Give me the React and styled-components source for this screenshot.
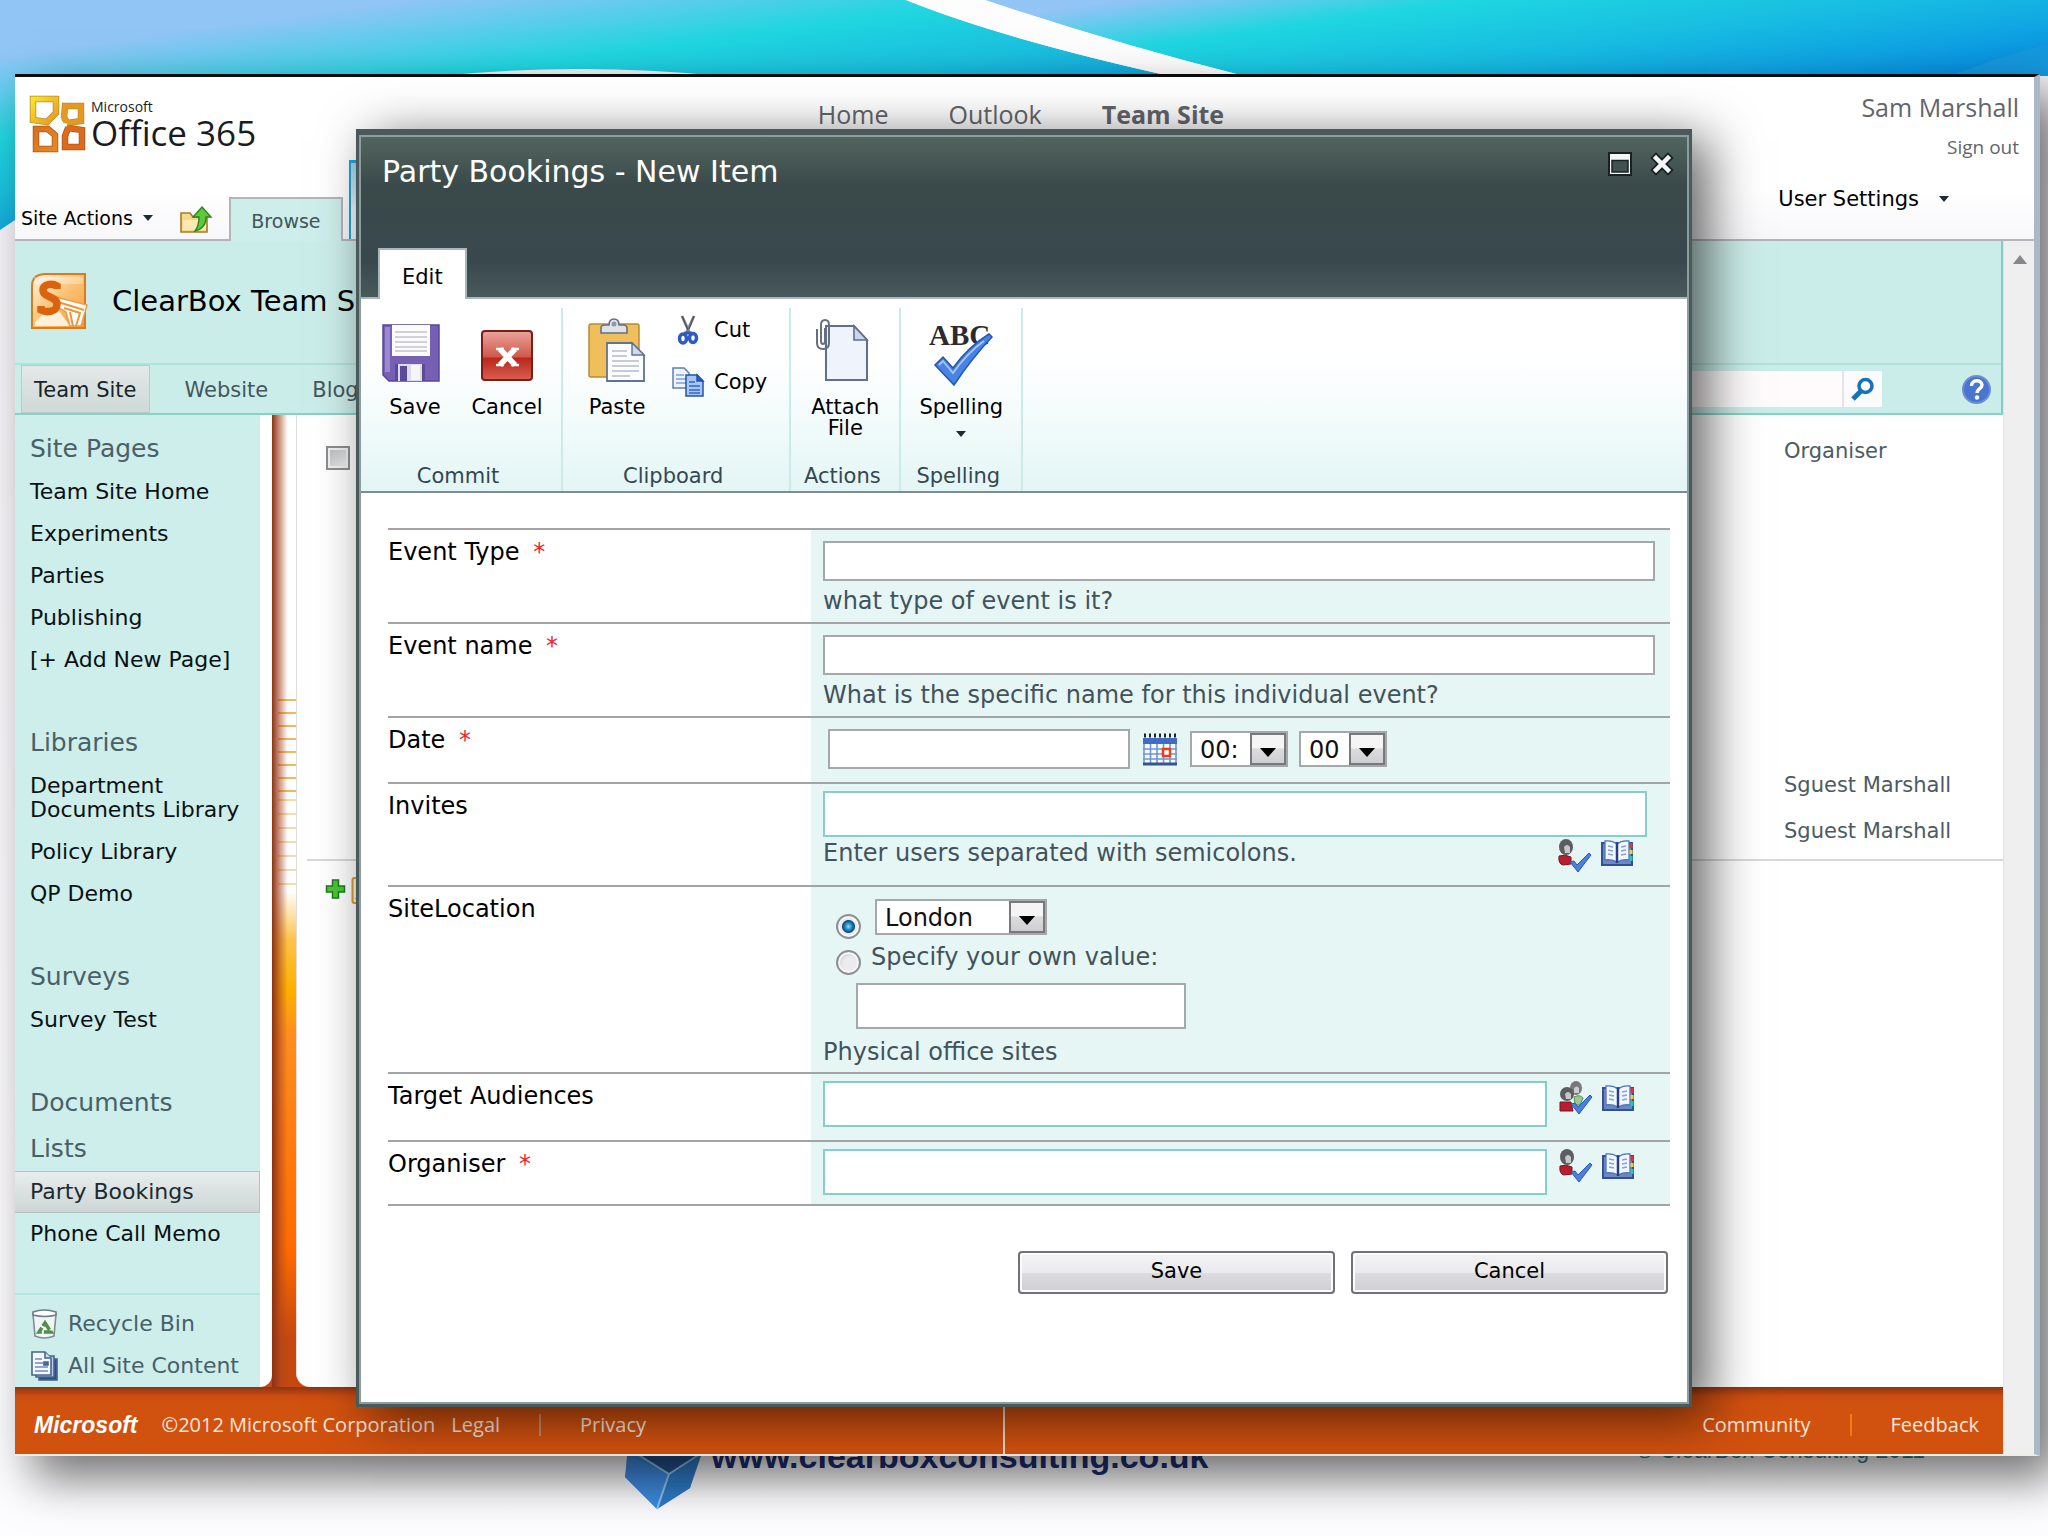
import React from "react";
import styled, { createGlobalStyle, css } from "styled-components";

const verdana = `"DejaVu Sans", "Noto Sans", sans-serif`;
const segoe = `"Open Sans", "Noto Sans", sans-serif`;

const GlobalStyle = createGlobalStyle`
  *, *::before, *::after { box-sizing: border-box; }
  body { margin: 0; background: #fbf9fc; font-family: ${verdana}; color: #000; }
  a { color: inherit; text-decoration: none; }
  button { font: inherit; color: inherit; background: none; border: 0; padding: 0; cursor: pointer; }
  input, select { font: inherit; margin: 0; border-radius: 0; }
  ul { list-style: none; margin: 0; padding: 0; }
  h1, h2, h3, p { margin: 0; font-weight: 400; }
  svg { display: block; flex: none; overflow: visible; }
`;

/* ---------- slide ---------- */

const Slide = styled.div`
  position: relative;
  min-height: 100vh;
  padding: 74px 8px 0 15px;
  overflow: hidden;
  background: linear-gradient(#f4f2f6, #faf8fb 60%, #fdfcfe);
`;

const Backdrop = styled.svg`
  position: absolute;
  top: 0;
  left: 0;
  width: 100%;
  height: 240px;
`;

const SlideFooter = styled.footer`
  display: flex;
  align-items: flex-start;
  gap: 8px;
  margin-top: -20px;
  padding: 0 115px 0 610px;
  min-height: 100px;
`;

const SlideUrl = styled.strong`
  position: relative;
  font: 700 34px/40px "Liberation Sans", sans-serif;
  color: #1f2f74;
`;

const SlideCopyright = styled.span`
  position: relative;
  margin-left: auto;
  font: 400 23px/28px "Liberation Sans", sans-serif;
  color: #2c7f88;
`;

const Gem = styled.svg`
  position: relative;
`;

/* ---------- browser window ---------- */

const Window = styled.div`
  position: relative;
  z-index: 1;
  background: #fff;
  border-top: 3px solid #0c0c0e;
  border-right: 6px solid #a9b9c8;
  border-bottom: 2px solid #f0ece8;
  box-shadow: 18px 22px 44px rgba(0, 0, 0, 0.55);
`;

const Header = styled.header`
  background: linear-gradient(#fff, #fff 70%, #f7f6f9);
`;

const TopRow = styled.div`
  display: grid;
  grid-template-columns: 1fr auto 1fr;
  height: 83px;
  padding: 14px 15px 0 8px;
  font-family: ${segoe};
  color: #63656b;
`;

const Brand = styled.a`
  display: flex;
  gap: 6px;
  padding: 5px 0 0 7px;
  color: #1b1b1d;
`;

const BrandText = styled.span`
  display: flex;
  flex-direction: column;
  font-size: 35px;
  line-height: 36px;
`;

const BrandSmall = styled.span`
  font-size: 14px;
  line-height: 16px;
  padding-top: 3px;
`;

const TopNav = styled.nav`
  display: flex;
  gap: 60px;
  padding-top: 6px;
  font-size: 25px;
  line-height: 34px;
`;

const TopLink = styled.a`
  font-weight: ${(p) => (p.$current ? 700 : 400)};
`;

const Account = styled.div`
  display: flex;
  flex-direction: column;
  align-items: flex-end;
  gap: 11px;
  font-size: 25px;
  line-height: 32px;
`;

const SignOut = styled.a`
  font-size: 19px;
  line-height: 26px;
`;

const RibbonBar = styled.div`
  display: flex;
  align-items: flex-end;
  height: 81px;
  padding-left: 6px;
  border-bottom: 2px solid #b4b5ba;
`;

const MenuButton = styled.button`
  display: flex;
  align-items: center;
  gap: 10px;
  font-size: 19px;
  line-height: 24px;
  margin-bottom: 9px;
`;

const UserMenu = styled(MenuButton)`
  gap: 20px;
  font-size: 21px;
  margin: 0 85px 28px auto;
`;

const Arrow = styled.span`
  border: 5px solid transparent;
  border-top: 6px solid #1d2c33;
  border-bottom: 0;
`;

const UpButton = styled.button`
  margin: 0 17px 5px 27px;
`;

const BrowseTab = styled.button`
  width: 114px;
  height: 44px;
  margin-bottom: -2px;
  padding-top: 2px;
  border: 2px solid #b4b5ba;
  border-bottom: 0;
  background: #cdeeea;
  color: #44545b;
  font-size: 19px;
  line-height: 24px;
`;

const ContextTab = styled.div`
  width: 60px;
  height: 79px;
  margin-left: 6px;
  border-top: 3px solid #19a7df;
  border-left: 2px solid #19a7df;
  background: linear-gradient(#9fd5ea, #f3f6fb 60%);
`;

const Viewport = styled.div`
  display: flex;
`;

const Main = styled.div`
  flex: 1;
  min-width: 0;
`;

const ScrollTrack = styled.div`
  width: 31px;
  padding: 14px 0 0 9px;
  border-left: 1px solid #e3e3e5;
  background: #efeff0;
`;

const SiteBand = styled.div`
  border-right: 2px solid #83d0c3;
  border-bottom: 2px solid #86d3c5;
  background: #cbede9;
`;

const SiteTitle = styled.div`
  display: flex;
  align-items: center;
  gap: 25px;
  height: 124px;
  padding: 0 0 2px 15px;
  border-bottom: 2px solid #ace5da;
`;

const SiteName = styled.h1`
  font-size: 29px;
  line-height: 36px;
`;

const TabBar = styled.nav`
  display: flex;
  height: 48px;
  padding-left: 6px;
  font-size: 21px;
  line-height: 24px;
  color: #44575d;
`;

const SiteTab = styled.a`
  padding: 13px 22px 11px;
  ${(p) =>
    p.$current &&
    css`
      padding: 12px 12px 10px;
      margin-right: 13px;
      border: 1px solid #bccac8;
      color: #17242a;
      background: linear-gradient(#e3e9e8, #cfd9d8);
    `}
`;

const SearchForm = styled.form`
  display: flex;
  align-items: center;
  margin-left: auto;
  padding-right: 10px;
`;

const SearchInput = styled.input`
  width: 300px;
  height: 36px;
  border: 0;
  border-right: 2px solid #e4e4e8;
  background: #fdfbfc;
`;

const SearchButton = styled.button`
  display: grid;
  place-items: center;
  width: 38px;
  height: 36px;
  margin-right: 80px;
  background: #fcfbfc;
`;

/* ---------- page body ---------- */

const Body = styled.div`
  display: flex;
  background: #c4480f;
`;

const SideWrap = styled.div`
  display: flex;
  flex: none;
  padding-right: 12px;
  overflow: hidden;
  background: #fff;
  border-bottom-right-radius: 12px;
`;

const Sidebar = styled.aside`
  width: 245px;
  background: #cdeeea;
`;

const SideHeading = styled.h2`
  margin-top: ${(p) => (p.$gap === "first" ? 19 : p.$gap === "tight" ? 9 : 47)}px;
  padding: 0 0 7px 15px;
  font-size: 25px;
  line-height: 30px;
  color: #4a6068;
`;

const SideLink = styled.a`
  display: flex;
  align-items: center;
  min-height: 42px;
  padding: 9px 15px;
  font-size: 22px;
  line-height: 24px;
  color: #0b1114;
  ${(p) =>
    p.$current &&
    css`
      border: 1px solid #b5c1c1;
      border-left: 0;
      padding: 8px 15px;
      color: #1c2a30;
      background: linear-gradient(#e8edec, #cdd6d6);
    `}
`;

const ToolLink = styled(SideLink)`
  gap: 10px;
  height: 42px;
  padding: 0 16px;
  color: #48606a;
`;

const SideTools = styled.div`
  margin-top: 38px;
  padding-top: 8px;
  border-top: 2px solid #b2e6df;
`;

const OrangeRail = styled.div`
  flex: none;
  width: 24px;
  background:
    linear-gradient(to right, #8d3211, #a5452080 35%, transparent 65%),
    repeating-linear-gradient(#f3b75c 0 2px, transparent 2px 13px) right 284px / 18px 96px no-repeat,
    repeating-linear-gradient(#f8d9a8 0 2px, transparent 2px 14px) right 384px / 18px 90px no-repeat,
    linear-gradient(#fff, #fff 49%, #ffc24a 54%, #ffb000 59%, #ff8d1f 64%, #ff6a00 86%, #c4480f 95%);
`;

const Content = styled.section`
  flex: 1;
  min-width: 0;
  padding-left: 10px;
  border-left: 1px solid #dcdce0;
  border-bottom-left-radius: 14px;
  background: #fff;
`;

const ListTable = styled.table`
  width: 100%;
  border-collapse: collapse;
  border-bottom: 2px solid #d7d8dc;
  font-size: 21px;
  line-height: 24px;
  color: #4b5b62;
  td, th {
    padding: 0;
    font-weight: 400;
    text-align: left;
    vertical-align: top;
  }
`;

const ListHeadRow = styled.tr`
  height: 358px;
`;

const ListRow = styled.tr`
  height: ${(p) => (p.$last ? 41 : 46)}px;
`;

const HeadCell = styled.th`
  &&& {
    padding-top: ${(p) => p.$top}px;
    padding-left: ${(p) => p.$left || 0}px;
    width: ${(p) => p.$width || "auto"};
  }
`;

const CheckBox = styled.input`
  appearance: none;
  display: block;
  width: 24px;
  height: 24px;
  border: 2px solid #8b8d90;
  background: linear-gradient(135deg, #b4b6b9, #f4f4f5);
  box-shadow: inset 0 0 0 2px #f0f0f1;
`;

const AddRow = styled.div`
  display: flex;
  gap: 6px;
  padding: 18px 0 0 19px;
`;

const SiteFooter = styled.footer`
  display: flex;
  align-items: center;
  height: 67px;
  padding: 8px 24px 0 19px;
  background: linear-gradient(#8e3512, #c94c0f 9px, #d1510f 16px);
  font: 400 20px/28px ${segoe};
  color: #fbe6da;
`;

const FooterLogo = styled.strong`
  margin-right: 24px;
  font: italic 900 23px/28px "Liberation Sans", sans-serif;
  color: #fff;
`;

const FooterLink = styled.a`
  margin-left: ${(p) => p.$gap || 0}px;
`;

const FooterBar = styled.span`
  width: 2px;
  height: 22px;
  margin: 0 39px;
  background: ${(p) => p.$color};
`;

const FooterRight = styled.div`
  display: flex;
  align-items: center;
  margin-left: auto;
`;

const FooterRule = styled.span`
  width: 2px;
  height: 59px;
  margin-left: 357px;
  background: #f0d9cc;
`;

/* ---------- dialog ---------- */

const Dialog = styled.div`
  position: absolute;
  z-index: 2;
  top: 52px;
  left: 341px;
  right: 342px;
  border: 3px solid #4a5a5a;
  border-top-width: 6px;
  box-shadow: 16px 10px 48px rgba(0, 0, 0, 0.62);
`;

const DialogInner = styled.div`
  border: 2px solid #8b9d9f;
  background: #fff;
`;

const DialogHead = styled.div`
  display: flex;
  flex-direction: column;
  gap: 56px;
  padding: 15px 14px 0 17px;
  border-bottom: 2px solid #a9b7ba;
  background: linear-gradient(#53655f, #3a4a4a 30%, #38484d 78%, #4a5a5b);
`;

const DialogTitleRow = styled.div`
  display: flex;
  justify-content: space-between;
  padding-left: 4px;
`;

const DialogTitle = styled.h2`
  font-size: 30px;
  line-height: 40px;
  color: #fff;
`;

const DialogControls = styled.div`
  display: flex;
  align-items: flex-start;
  gap: 19px;
`;

const EditTab = styled.button`
  align-self: flex-start;
  margin-bottom: -2px;
  padding: 15px 22px 10px;
  border: 2px solid #a9b7ba;
  border-bottom: 0;
  background: #fff;
  font-size: 21px;
  line-height: 24px;
`;

const Ribbon = styled.div`
  display: flex;
  height: 194px;
  padding-top: 9px;
  border-bottom: 2px solid #7d8d92;
  background: linear-gradient(#fff 30%, #f0fafa 70%, #e3f5f6);
`;

const Group = styled.div`
  display: flex;
  flex-direction: column;
  justify-content: space-between;
  padding: 0 8px 3px;
  border-right: 2px solid #c9ece9;
  font-size: 21px;
`;

const GroupTools = styled.div`
  display: flex;
`;

const GroupLabel = styled.div`
  padding-right: 6px;
  line-height: 24px;
  text-align: center;
  white-space: nowrap;
  color: #35474f;
`;

const BigButton = styled.button`
  display: flex;
  flex-direction: column;
  align-items: center;
  width: ${(p) => p.$width || 92}px;
  padding-top: 10px;
  font-size: 21px;
  line-height: 21px;
  svg { margin-bottom: 15px; }
`;

const MenuArrow = styled(Arrow)`
  margin-top: 13px;
`;

const SmallTools = styled.div`
  display: flex;
  flex-direction: column;
  gap: 20px;
  padding: 6px 14px 0 9px;
`;

const SmallButton = styled.button`
  display: flex;
  align-items: center;
  gap: 10px;
  height: 32px;
  font-size: 21px;
  line-height: 24px;
`;

const Form = styled.form`
  padding: 35px 17px 108px 27px;
  font-size: 24px;
  line-height: 28px;
`;

const Fields = styled.div`
  border-bottom: 2px solid #a2a4a7;
`;

const Row = styled.div`
  display: grid;
  grid-template-columns: minmax(0, 423px) minmax(0, 1fr);
  border-top: 2px solid #a2a4a7;
`;

const Label = styled.label`
  padding-top: 8px;
`;

const Star = styled.span`
  margin-left: 6px;
  color: #f0232b;
`;

const Field = styled.div`
  display: flex;
  flex-direction: column;
  gap: ${(p) => p.$gap || 0}px;
  padding: ${(p) => p.$top}px 15px ${(p) => p.$bottom}px 12px;
  background: #e6f6f5;
`;

const TextInput = styled.input`
  width: ${(p) => p.$width || "100%"};
  height: ${(p) => (p.$tall ? 46 : 40)}px;
  padding: 0 8px;
  border: 2px solid ${(p) => (p.$teal ? "#84d0c9" : "#a5a8ab")};
  background: #fff;
`;

const Help = styled.p`
  color: #42535b;
`;

const DateLine = styled.div`
  display: flex;
  align-items: center;
  gap: 11px;
  padding-left: 5px;
`;

const DateButton = styled.button`
  padding: 0 2px;
`;

const SelectBox = styled.span`
  position: relative;
  display: inline-block;
  width: ${(p) => p.$width}px;
  height: 36px;
  border: 2px solid #a5a8ab;
  background: #fff;
  &::before {
    content: "";
    position: absolute;
    top: 0;
    right: 0;
    width: 36px;
    height: 32px;
    border: 2px solid #77797c;
    background: linear-gradient(#f5f5f6 45%, #dcdcde 50%, #cfcfd2);
    pointer-events: none;
  }
  &::after {
    content: "";
    position: absolute;
    right: 10px;
    top: 15px;
    border: 8px solid transparent;
    border-top: 9px solid #000;
    border-bottom: 0;
    pointer-events: none;
  }
`;

const Select = styled.select`
  appearance: none;
  display: block;
  width: 100%;
  height: 32px;
  padding: 2px 0 0 8px;
  border: 0;
  background: transparent;
  color: #111;
  line-height: 30px;
`;

const PickerLine = styled.div`
  display: flex;
  align-items: flex-start;
  gap: 12px;
  padding-right: 21px;
`;

const HelpLine = styled.div`
  display: flex;
  justify-content: space-between;
  padding-right: 22px;
  height: 28px;
`;

const PickerIcons = styled.span`
  display: flex;
  gap: 9px;
`;

const PickerInset = styled.div`
  padding-right: 8px;
`;

const RadioLine = styled.div`
  display: flex;
  align-items: flex-end;
  gap: ${(p) => p.$gap}px;
  padding-left: 13px;
`;

const Radio = styled.input`
  appearance: none;
  flex: none;
  width: 25px;
  height: 25px;
  margin-bottom: -4px;
  border: 2px solid #8e9194;
  border-radius: 50%;
  background: radial-gradient(circle at 60% 60%, #ececee 40%, #b9bcc1);
  box-shadow: inset 0 0 0 2px #f6f6f7;
  &:checked {
    background: radial-gradient(circle at 50% 50%, #8fdcff 0, #2594cf 3px, #0e4a78 6px, #e9eaec 7px);
  }
`;

const OwnValue = styled.div`
  padding: 12px 0 9px 33px;
  display: flex;
`;

const OwnLabel = styled.label`
  margin-top: 8px;
  color: #42535b;
`;

const FormActions = styled.div`
  display: flex;
  justify-content: flex-end;
  gap: 16px;
  padding: 45px 2px 0 0;
`;

const PushButton = styled.button`
  width: 317px;
  height: 43px;
  border: 2px solid #707276;
  border-radius: 4px;
  box-shadow: inset 0 0 0 2px #fbfbfc;
  background: linear-gradient(#f3f2f4, #ebeaec 50%, #dcdbde 52%, #cfced2);
  font-size: 21px;
  line-height: 24px;
  padding-bottom: 4px;
`;

/* ---------- drawings ---------- */

const OfficeMark = () => (
  <svg width="55" height="56" viewBox="0 0 55 56" fill="none">
    <defs>
      <linearGradient id="om1" x1="0" y1="0" x2="1" y2="1">
        <stop offset="0" stopColor="#f7e22c" />
        <stop offset="1" stopColor="#e79a1f" />
      </linearGradient>
      <linearGradient id="om2" x1="0" y1="0" x2="1" y2="1">
        <stop offset="0" stopColor="#d9711c" />
        <stop offset="1" stopColor="#e58a26" />
      </linearGradient>
    </defs>
    <path d="M3 3H26V17L17 26L3 24Z" stroke="#b98a2a" strokeWidth="6.500" />
    <path d="M35 10H51V25L38 27L34 22Z" stroke="#b98a2a" strokeWidth="6.500" />
    <path d="M6 33H18L25 39V53H6Z" stroke="#a8561c" strokeWidth="6.500" />
    <path d="M38 32L52 34V51H35V40Z" stroke="#a8561c" strokeWidth="6.500" />
    <path d="M3 3H26V17L17 26L3 24Z" stroke="url(#om1)" strokeWidth="5" />
    <path d="M35 10H51V25L38 27L34 22Z" stroke="#e39a22" strokeWidth="5" />
    <path d="M6 33H18L25 39V53H6Z" stroke="url(#om2)" strokeWidth="5" />
    <path d="M38 32L52 34V51H35V40Z" stroke="#dd6b1e" strokeWidth="5" />
    <path d="M21 28L37 29M30 22L29 37" stroke="#fff" strokeWidth="3" />
  </svg>
);

const FolderUp = () => (
  <svg width="32" height="27" viewBox="0 0 32 27">
    <path d="M1 6h9l3 4h14v15H1z" fill="#f5d98b" stroke="#a37d2b" strokeWidth="1.6" />
    <path d="M3 13h23v10H3z" fill="#fbe9b4" />
    <path d="M22 0l9 10h-5c0 7-3 12-11 14 3-4 4-8 4-14h-6z" fill="#5cc83a" stroke="#2d8420" strokeWidth="1.4" />
  </svg>
);

const SiteLogo = () => (
  <svg width="57" height="58" viewBox="0 0 57 58">
    <defs>
      <linearGradient id="sl" x1="0" y1="0" x2="1" y2="1">
        <stop offset="0" stopColor="#fff6e6" />
        <stop offset=".5" stopColor="#fbc172" />
        <stop offset="1" stopColor="#f39a3a" />
      </linearGradient>
    </defs>
    <path d="M14 2H55V56H2V14Q2 3 14 2Z" fill="url(#sl)" stroke="#dd7b1c" strokeWidth="2" />
    <path d="M4 5H53V12H4Z" fill="#fff" opacity=".3" />
    <path d="M5 50L24 32L40 54H5Z" fill="#fffaf0" opacity=".85" />
    <path d="M26 25L57 33L51 54L40 54L36 40L24 33Z" fill="#fff" stroke="#ef9c45" strokeWidth="1.5" />
    <path d="M28 30L54 38M34 36L50 41L46 54M40 40l3 14" stroke="#f0963a" strokeWidth="2" fill="none" />
    <path d="M27 17v-3c-5-3-14-2-14 4 0 8 14 6 14 14 0 8-10 9-16 6v-4" fill="none" stroke="#d9640d" strokeWidth="7.500" />
  </svg>
);

const Magnifier = () => (
  <svg width="24" height="24" viewBox="0 0 24 24" fill="none" stroke="#1672b8">
    <circle cx="14.500" cy="9" r="6.500" strokeWidth="3.500" />
    <path d="M10 14L2 22" strokeWidth="5" />
  </svg>
);

const HelpIcon = () => (
  <svg width="29" height="29" viewBox="0 0 29 29">
    <circle cx="14.500" cy="14.500" r="13.500" fill="#4775cf" stroke="#6d8fd2" strokeWidth="2" />
    <path d="M9.500 11c0-7 10.500-6.500 10.500-1 0 4-5 3.500-5 8" fill="none" stroke="#fff" strokeWidth="3.400" />
    <circle cx="15" cy="22.500" r="2.200" fill="#fff" />
  </svg>
);

const RecycleIcon = () => (
  <svg width="27" height="30" viewBox="0 0 27 30">
    <path d="M2 5L4 27q9 4 19 0L25 5z" fill="#f2f5f7" stroke="#7e8d96" strokeWidth="1.600" />
    <path d="M2 6V3q11-4 23 0v3q-11 3-23 0z" fill="#fff" stroke="#6d7d86" strokeWidth="1.600" />
    <path d="M14 14l6 9H8z" fill="none" stroke="#4e8f4a" strokeWidth="3.500" strokeDasharray="8 2" />
  </svg>
);

const ContentIcon = () => (
  <svg width="27" height="30" viewBox="0 0 27 30" stroke="#44648f" strokeWidth="1.600">
    <path d="M8 8h18v21H8z" fill="#2f4f80" />
    <path d="M5 5h18v21H5z" fill="#b9cbe6" />
    <path d="M1 1h13l6 6v17H1z" fill="#f5f8fd" />
    <path d="M14 1v6h6" fill="#cfdcf0" />
    <path d="M4 8h7M4 12h8M4 16h13M4 20h13" stroke="#6d8cc0" />
    <path d="M13 11h4v3h-4z" fill="#3d6ec0" />
  </svg>
);

const PlusIcon = () => (
  <svg width="19" height="20" viewBox="0 0 19 20">
    <path d="M6.500 1h6v6h6v6h-6v6h-6v-6h-6V7h6z" fill="#4cc43a" stroke="#1e7d1a" strokeWidth="1.500" />
  </svg>
);

const NewItemIcon = () => (
  <svg width="30" height="30" viewBox="0 0 30 30">
    <rect x="1.500" y="-1" width="27" height="25" rx="2" fill="#fdf0d5" stroke="#d99a3d" strokeWidth="2" />
    <path d="M4 20l8-10 6 10z" fill="#6a88b8" />
  </svg>
);

const MaximizeIcon = () => (
  <svg width="24" height="24" viewBox="0 0 24 24">
    <rect x="1" y="1" width="22" height="22" fill="#f3f6f5" stroke="#182222" strokeWidth="2" />
    <rect x="4" y="8.500" width="16" height="11.500" fill="#42524f" stroke="#182222" strokeWidth="1.500" />
  </svg>
);

const CloseIcon = () => (
  <svg width="22" height="24" viewBox="0 0 22 24" strokeLinecap="square">
    <path d="M5 6L17 18M17 6L5 18" stroke="#182222" strokeWidth="8" />
    <path d="M5 6L17 18M17 6L5 18" stroke="#f3f6f5" strokeWidth="4.500" />
  </svg>
);

const SaveIcon = () => (
  <svg width="66" height="64" viewBox="0 0 66 64">
    <path d="M1 7h56v56H7l-6-6z" fill="#7560b4" stroke="#56459a" strokeWidth="1.500" />
    <path d="M3 9h5v45H3z" fill="#9b89cf" />
    <path d="M10 7h38v31H10z" fill="#fbfbfc" />
    <path d="M13 14h32M13 19h32M13 24h32M13 29h32M13 33h32" stroke="#c3c3ca" strokeWidth="1.500" />
    <path d="M13 46h30v17H13z" fill="#5a4a98" />
    <path d="M16 46h24v17H16z" fill="#dcdce4" />
    <path d="M18 48h7v15h-7z" fill="#5a489c" />
    <path d="M29 47h9v15h-9z" fill="#f6f6f8" />
  </svg>
);

const CancelIcon = () => (
  <svg width="52" height="64" viewBox="0 0 52 64">
    <defs>
      <linearGradient id="ci" x1="0" y1="0" x2="0" y2="1">
        <stop offset="0" stopColor="#e9a59c" />
        <stop offset=".52" stopColor="#d2594c" />
        <stop offset=".56" stopColor="#b9281b" />
        <stop offset="1" stopColor="#d9604f" />
      </linearGradient>
    </defs>
    <rect x="1" y="13" width="50" height="49" rx="3" fill="url(#ci)" stroke="#7c1d17" strokeWidth="2" />
    <path d="M19 31L34 47M34 31L19 47" stroke="#fff" strokeWidth="5.500" />
    <path d="M15 31h8M30 31h8M15 47h8M30 47h8" stroke="#fff" strokeWidth="2.500" />
  </svg>
);

const PasteIcon = () => (
  <svg width="58" height="64" viewBox="0 0 58 64">
    <rect x="1" y="6" width="50" height="53" rx="2" fill="#efbf5c" stroke="#b98a34" strokeWidth="1.500" />
    <path d="M13 15V10q0-3 4-3h4q0-6 5-6t5 6h4q4 0 4 3v5z" fill="#dfe2e6" stroke="#667080" strokeWidth="1.600" />
    <circle cx="26" cy="6" r="2.500" fill="#8f98a4" />
    <path d="M19 25h25l12 12v26H19z" fill="#fbfcfe" stroke="#5f7396" strokeWidth="1.800" />
    <path d="M44 25v12h12z" fill="#d0daea" stroke="#5f7396" strokeWidth="1.400" />
    <path d="M24 33h15M24 38h15M24 43h27M24 48h27M24 53h27M24 58h18" stroke="#b4bccb" strokeWidth="1.500" />
  </svg>
);

const CutIcon = () => (
  <svg width="32" height="30" viewBox="0 0 32 30" fill="none">
    <path d="M10 1L18 19M22 1L14 19" stroke="#7a828c" strokeWidth="2.800" />
    <path d="M10 1L16 15M22 1L17 14" stroke="#3f464e" strokeWidth="1" />
    <ellipse cx="11" cy="23.500" rx="3.500" ry="4.500" stroke="#2d5cba" strokeWidth="3.500" />
    <ellipse cx="21" cy="23" rx="3.500" ry="4.500" stroke="#2d5cba" strokeWidth="3.500" />
    <path d="M12 18h8" stroke="#2d5cba" strokeWidth="3" />
  </svg>
);

const CopyIcon = () => (
  <svg width="32" height="30" viewBox="0 0 32 30" strokeWidth="1.500">
    <path d="M1 1h11l5 5v15H1z" fill="#eef4fd" stroke="#5c7fb8" />
    <path d="M4 8h8M4 12h10M4 16h10" stroke="#7aa0dc" />
    <path d="M14 8h11l6 6v15H14z" fill="#a9c6f5" stroke="#2452a8" />
    <path d="M25 8v6h6z" fill="#2f66cc" stroke="#2452a8" />
    <path d="M17 15h6M17 19h11M17 23h11M17 26h11" stroke="#2f66cc" />
  </svg>
);

const AttachIcon = () => (
  <svg width="60" height="64" viewBox="0 0 60 64">
    <path d="M11 8h28l13 14v40H11z" fill="#eef3fc" stroke="#5f6f90" strokeWidth="2" />
    <path d="M39 8v14h13z" fill="#c9d5ea" stroke="#5f6f90" strokeWidth="1.600" />
    <path d="M2 11v14q0 6 6 6t6-6V7q0-5-4-5t-4 5v16q0 3 2 3t2-3V10" fill="none" stroke="#66707f" strokeWidth="2" />
  </svg>
);

const SpellIcon = () => (
  <svg width="66" height="64" viewBox="0 0 66 64">
    <text x="1" y="27" fontFamily="Liberation Serif, serif" fontWeight="700" fontSize="29" fill="#2b2b2e">
      ABC
    </text>
    <path d="M7 47l8-8 10 11Q40 29 61 16l3 3Q44 40 26 67z" fill="#4a83e6" stroke="#2356b4" strokeWidth="1.500" />
    <path d="M11 47l4-4 10 12Q40 34 56 23" fill="none" stroke="#a9c8fa" strokeWidth="1.800" />
  </svg>
);

const CalendarIcon = () => (
  <svg width="34" height="33" viewBox="0 0 34 33">
    <path d="M0 5h34v27H0z" fill="#fbfcfe" />
    <path d="M0 5h34v6H0z" fill="#3f6cc4" />
    <path d="M1 2.500h32" stroke="#222" strokeWidth="4" strokeDasharray="2 3" />
    <path d="M1 11v20M7.500 11v20M14 11v20M20.500 11v20M27 11v20M33 11v20M0 16h34M0 21h34M0 26h34" stroke="#6f94d6" strokeWidth="1.600" />
    <path d="M0 31h34" stroke="#35558f" strokeWidth="3" />
    <rect x="20" y="16" width="7" height="7" fill="#fff" stroke="#e2431e" strokeWidth="2.500" />
  </svg>
);

const PersonIcon = ({ pair }) => (
  <svg width="34" height="34" viewBox="0 0 34 34">
    {pair && (
      <>
        <ellipse cx="17" cy="7" rx="6" ry="7" fill="#77797b" />
        <path d="M15 7q3-3 5 0v5h-5z" fill="#c9cbcc" />
        <path d="M15 16q6-3 9 1l-3 7h-5z" fill="#9fc795" stroke="#4c9a3f" />
      </>
    )}
    <ellipse cx={8} cy={pair ? 13 : 8} rx="7" ry={pair ? 7 : 8} fill="#5b5d5f" />
    <path d={pair ? "M6 13q3-4 6 0v5H7z" : "M6 8q3-4 6 0v6H7z"} fill="#c4c6c7" />
    <path d={pair ? "M1 21h11l2 9H1z" : "M1 17q6-2 12 1v7l-8 1q-5-1-4-9z"} fill="#b81f2d" stroke="#7d1420" />
    <path d="M12 23l4-1 3 4 12-12 2 2-13 17z" fill="#4d7fdd" stroke="#2b58b0" />
  </svg>
);

const BookIcon = () => (
  <svg width="32" height="28" viewBox="0 0 32 28">
    <path d="M1 4h30v22H1z" fill="#6d87c4" stroke="#34508f" strokeWidth="2" />
    <path d="M4 2q7-1 12 3v18q-6-3-12-2zM28 2q-7-1-12 3v18q6-3 12-2z" fill="#f2f7ff" stroke="#5077c4" strokeWidth="1.300" />
    <path d="M7 7l5 1M7 11l5 1M7 15l5 1M20 8l5-1M20 12l5-1M20 16l5-1" stroke="#7fa3e6" strokeWidth="1.500" />
    <path d="M16 4v20" stroke="#27407d" strokeWidth="2.500" />
    <path d="M30 4v5" stroke="#d63a34" strokeWidth="3" />
    <path d="M30 11v4" stroke="#f1d22f" strokeWidth="3" />
    <path d="M30 17v5" stroke="#2ec4b8" strokeWidth="3" />
  </svg>
);

const Sky = () => (
  <Backdrop viewBox="0 0 2048 240" preserveAspectRatio="none" aria-hidden="true">
    <defs>
      <linearGradient id="skyL" gradientUnits="userSpaceOnUse" x1="0" y1="0" x2="56" y2="400">
        <stop offset=".14" stopColor="#90c5f6" />
        <stop offset=".34" stopColor="#20d6e0" />
        <stop offset=".48" stopColor="#1ac0de" />
        <stop offset=".6" stopColor="#129fdc" />
      </linearGradient>
      <linearGradient id="skyR" gradientUnits="userSpaceOnUse" x1="0" y1="0" x2="58" y2="400">
        <stop offset=".4" stopColor="#92c4f6" />
        <stop offset=".52" stopColor="#1fd6e0" />
        <stop offset=".68" stopColor="#17bce2" />
        <stop offset=".8" stopColor="#0fa2e3" />
        <stop offset=".9" stopColor="#0586dc" />
      </linearGradient>
    </defs>
    <path d="M0 0H906Q1000 38 1170 76H720Q580 62 440 76H60L0 230Z" fill="url(#skyL)" />
    <path d="M985 0Q1110 42 1244 76H2048V0Z" fill="url(#skyR)" />
    <path d="M906 0H985Q1110 42 1244 76H1170Q1000 38 906 0Z" fill="#fdfdfd" />
    <path d="M0 60H60V190L0 230Z" fill="url(#skyL)" />
    <path d="M1950 76Q2000 56 2048 44V76Z" fill="#1598de" />
  </Backdrop>
);

/* ---------- data ---------- */

const sideSections = [
  { title: "Site Pages", gap: "first", links: ["Team Site Home", "Experiments", "Parties", "Publishing", "[+ Add New Page]"] },
  { title: "Libraries", links: ["Department Documents Library", "Policy Library", "QP Demo"] },
  { title: "Surveys", links: ["Survey Test"] },
  { title: "Documents", links: [] },
  { title: "Lists", gap: "tight", links: ["Party Bookings", "Phone Call Memo"] },
];

const FieldLabel = ({ htmlFor, required, children }) => (
  <Label htmlFor={htmlFor}>
    {children}
    {required && <Star> *</Star>}
  </Label>
);

const Picker = ({ pair }) => (
  <PickerIcons>
    <button type="button" aria-label="Check names">
      <PersonIcon pair={pair} />
    </button>
    <button type="button" aria-label="Browse">
      <BookIcon />
    </button>
  </PickerIcons>
);

const stop = (e) => e.preventDefault();

const NewItemDialog = () => (
  <Dialog role="dialog" aria-labelledby="dialog-title">
    <DialogInner>
      <DialogHead>
        <DialogTitleRow>
          <DialogTitle id="dialog-title">Party Bookings - New Item</DialogTitle>
          <DialogControls>
            <button type="button" aria-label="Maximize">
              <MaximizeIcon />
            </button>
            <button type="button" aria-label="Close">
              <CloseIcon />
            </button>
          </DialogControls>
        </DialogTitleRow>
        <EditTab type="button">Edit</EditTab>
      </DialogHead>

      <Ribbon>
        <Group>
          <GroupTools>
            <BigButton type="button"><SaveIcon />Save</BigButton>
            <BigButton type="button"><CancelIcon />Cancel</BigButton>
          </GroupTools>
          <GroupLabel>Commit</GroupLabel>
        </Group>
        <Group>
          <GroupTools>
            <BigButton type="button"><PasteIcon />Paste</BigButton>
            <SmallTools>
              <SmallButton type="button"><CutIcon />Cut</SmallButton>
              <SmallButton type="button"><CopyIcon />Copy</SmallButton>
            </SmallTools>
          </GroupTools>
          <GroupLabel>Clipboard</GroupLabel>
        </Group>
        <Group>
          <GroupTools>
            <BigButton type="button"><AttachIcon />Attach File</BigButton>
          </GroupTools>
          <GroupLabel>Actions</GroupLabel>
        </Group>
        <Group>
          <GroupTools>
            <BigButton type="button" $width={104}><SpellIcon />Spelling<MenuArrow /></BigButton>
          </GroupTools>
          <GroupLabel>Spelling</GroupLabel>
        </Group>
      </Ribbon>

      <Form onSubmit={stop}>
        <Fields>
          <Row>
            <FieldLabel htmlFor="event-type" required>Event Type</FieldLabel>
            <Field $top={11} $bottom={7} $gap={6}>
              <TextInput id="event-type" />
              <Help>what type of event is it?</Help>
            </Field>
          </Row>
          <Row>
            <FieldLabel htmlFor="event-name" required>Event name</FieldLabel>
            <Field $top={11} $bottom={7} $gap={6}>
              <TextInput id="event-name" />
              <Help>What is the specific name for this individual event?</Help>
            </Field>
          </Row>
          <Row>
            <FieldLabel htmlFor="date" required>Date</FieldLabel>
            <Field $top={11} $bottom={13}>
              <DateLine>
                <TextInput id="date" $width="302px" />
                <DateButton type="button" aria-label="Pick a date"><CalendarIcon /></DateButton>
                <SelectBox $width={98}>
                  <Select aria-label="Hours" defaultValue="00:"><option>00:</option></Select>
                </SelectBox>
                <SelectBox $width={88}>
                  <Select aria-label="Minutes" defaultValue="00"><option>00</option></Select>
                </SelectBox>
              </DateLine>
            </Field>
          </Row>
          <Row>
            <FieldLabel htmlFor="invites">Invites</FieldLabel>
            <Field $top={7} $bottom={18} $gap={2}>
              <PickerInset><TextInput id="invites" $tall $teal /></PickerInset>
              <HelpLine>
                <Help>Enter users separated with semicolons.</Help>
                <Picker />
              </HelpLine>
            </Field>
          </Row>
          <Row>
            <FieldLabel htmlFor="location">SiteLocation</FieldLabel>
            <Field $top={12} $bottom={6}>
              <RadioLine $gap={14}>
                <Radio type="radio" name="loc" aria-label="Choose a site" defaultChecked />
                <SelectBox $width={172}>
                  <Select id="location" defaultValue="London"><option>London</option></Select>
                </SelectBox>
              </RadioLine>
              <RadioLine $gap={10}>
                <Radio type="radio" name="loc" id="own" />
                <OwnLabel htmlFor="own">Specify your own value:</OwnLabel>
              </RadioLine>
              <OwnValue>
                <TextInput $width="330px" $tall aria-label="Your own value" />
              </OwnValue>
              <Help>Physical office sites</Help>
            </Field>
          </Row>
          <Row>
            <FieldLabel htmlFor="audiences">Target Audiences</FieldLabel>
            <Field $top={7} $bottom={13}>
              <PickerLine>
                <TextInput id="audiences" $tall $teal />
                <Picker pair />
              </PickerLine>
            </Field>
          </Row>
          <Row>
            <FieldLabel htmlFor="organiser" required>Organiser</FieldLabel>
            <Field $top={7} $bottom={9}>
              <PickerLine>
                <TextInput id="organiser" $tall $teal />
                <Picker />
              </PickerLine>
            </Field>
          </Row>
        </Fields>
        <FormActions>
          <PushButton type="submit">Save</PushButton>
          <PushButton type="button">Cancel</PushButton>
        </FormActions>
      </Form>
    </DialogInner>
  </Dialog>
);

export default function App() {
  return (
    <Slide>
      <GlobalStyle />
      <Sky />
      <Window>
        <Header>
          <TopRow>
            <Brand href="#">
              <OfficeMark />
              <BrandText>
                <BrandSmall>Microsoft</BrandSmall>
                Office 365
              </BrandText>
            </Brand>
            <TopNav>
              <TopLink href="#">Home</TopLink>
              <TopLink href="#">Outlook</TopLink>
              <TopLink href="#" $current>Team Site</TopLink>
            </TopNav>
            <Account>
              <span>Sam Marshall</span>
              <SignOut href="#">Sign out</SignOut>
            </Account>
          </TopRow>
          <RibbonBar>
            <MenuButton type="button">Site Actions<Arrow /></MenuButton>
            <UpButton type="button" aria-label="Navigate up"><FolderUp /></UpButton>
            <BrowseTab type="button">Browse</BrowseTab>
            <ContextTab />
            <UserMenu type="button">User Settings<Arrow /></UserMenu>
          </RibbonBar>
        </Header>

        <Viewport>
          <Main>
            <SiteBand>
              <SiteTitle>
                <SiteLogo />
                <SiteName>ClearBox Team Site</SiteName>
              </SiteTitle>
              <TabBar>
                <SiteTab href="#" $current>Team Site</SiteTab>
                <SiteTab href="#">Website</SiteTab>
                <SiteTab href="#">Blog</SiteTab>
                <SearchForm onSubmit={stop}>
                  <SearchInput type="search" aria-label="Search this site" />
                  <SearchButton type="submit" aria-label="Search"><Magnifier /></SearchButton>
                  <button type="button" aria-label="Help"><HelpIcon /></button>
                </SearchForm>
              </TabBar>
            </SiteBand>

            <Body>
              <SideWrap>
                <Sidebar>
                  {sideSections.map((s) => (
                    <React.Fragment key={s.title}>
                      <SideHeading $gap={s.gap}>{s.title}</SideHeading>
                      <ul>
                        {s.links.map((l) => (
                          <li key={l}>
                            <SideLink href="#" $current={l === "Party Bookings"}>{l}</SideLink>
                          </li>
                        ))}
                      </ul>
                    </React.Fragment>
                  ))}
                  <SideTools>
                    <ToolLink href="#"><RecycleIcon />Recycle Bin</ToolLink>
                    <ToolLink href="#"><ContentIcon />All Site Content</ToolLink>
                  </SideTools>
                </Sidebar>
              </SideWrap>
              <OrangeRail />
              <Content>
                <ListTable>
                  <thead>
                    <ListHeadRow>
                      <HeadCell $top={31} $left={19}>
                        <CheckBox type="checkbox" aria-label="Select all" />
                      </HeadCell>
                      <HeadCell $top={24} $width="219px">Organiser</HeadCell>
                    </ListHeadRow>
                  </thead>
                  <tbody>
                    <ListRow><td /><td>Sguest Marshall</td></ListRow>
                    <ListRow $last><td /><td>Sguest Marshall</td></ListRow>
                  </tbody>
                </ListTable>
                <AddRow><PlusIcon /><NewItemIcon /></AddRow>
              </Content>
            </Body>

            <SiteFooter>
              <FooterLogo>Microsoft</FooterLogo>
              <span>©2012 Microsoft Corporation</span>
              <FooterLink href="#" $gap={16}>Legal</FooterLink>
              <FooterBar $color="#c98a6c" />
              <FooterLink href="#">Privacy</FooterLink>
              <FooterRule />
              <FooterRight>
                <FooterLink href="#">Community</FooterLink>
                <FooterBar $color="#f07a1c" />
                <FooterLink href="#">Feedback</FooterLink>
              </FooterRight>
            </SiteFooter>
          </Main>
          <ScrollTrack>
            <svg width="14" height="9" viewBox="0 0 14 9"><path d="M7 0l7 9H0z" fill="#85878b" /></svg>
          </ScrollTrack>
        </Viewport>

        <NewItemDialog />
      </Window>

      <SlideFooter>
        <Gem width="78" height="74" viewBox="0 0 78 74">
          <path d="M4 0H78L65 52L32 73L0 41Z" fill="#3b86d8" />
          <path d="M4 20L44 38L32 73L0 41Z" fill="#3f8be0" />
          <path d="M78 14L44 38L32 73L65 52Z" fill="#2f7cc8" />
          <path d="M14 18L44 38L78 16V0H10Z" fill="#24528f" />
          <path d="M44 38L32 73M44 38L78 16M44 38L12 18" stroke="#8fc6f0" strokeWidth="2" fill="none" />
        </Gem>
        <SlideUrl>www.clearboxconsulting.co.uk</SlideUrl>
        <SlideCopyright>© ClearBox Consulting 2011</SlideCopyright>
      </SlideFooter>
    </Slide>
  );
}
